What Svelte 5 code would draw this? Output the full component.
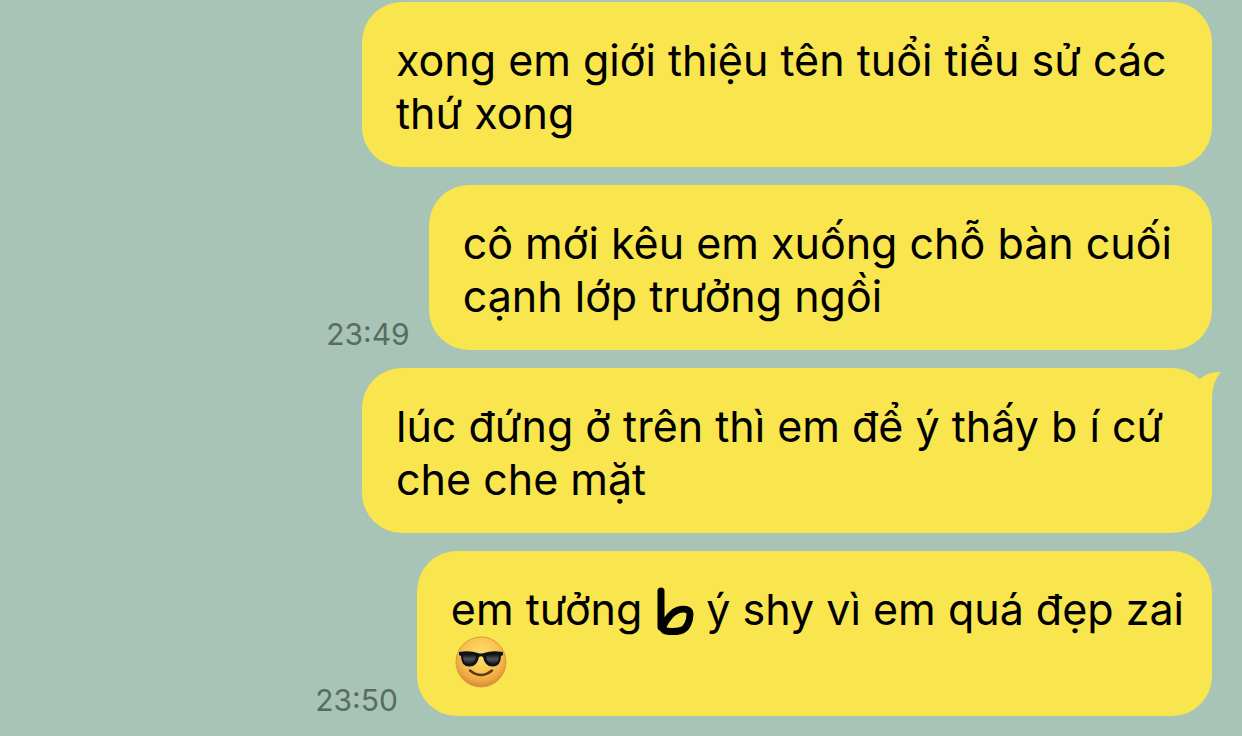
<script lang="ts">
  type Message = {
    lines: string[];
    time?: string;
    wide?: boolean;
    tail?: boolean;
    signed?: boolean;
  };

  const messages: Message[] = [
    { lines: ["xong em giới thiệu tên tuổi tiểu sử các", "thứ xong"], wide: true },
    { lines: ["cô mới kêu em xuống chỗ bàn cuối", "cạnh lớp trưởng ngồi"], time: "23:49" },
    { lines: ["lúc đứng ở trên thì em để ý thấy b í cứ", "che che mặt"], wide: true, tail: true },
    { lines: ["em tưởng", "ý shy vì em quá đẹp zai"], time: "23:50", signed: true },
  ];
</script>

<main>
  {#each messages as message}
    <article class="message">
      {#if message.time}
        <time>{message.time}</time>
      {/if}
      <div class="bubble" class:wide={message.wide} class:snug={message.signed}>
        {#if message.signed}
          <p class="line signed">
            <span>{message.lines[0]}</span>
            <svg class="scribble" viewBox="0 0 40 53" aria-hidden="true">
              <path d="M7 8V44M8 45C12 37 18 29 24 27C29 25.500 36 25.500 36 31C36 38 33 46 27 47.500C21 49 13 49 10 47" />
            </svg>
            <span>{message.lines[1]}</span>
          </p>
          <svg class="emoji" viewBox="0 0 52 52" role="img" aria-label="smiling face with sunglasses">
            <defs>
              <radialGradient id="face" cx="50%" cy="36%" r="66%">
                <stop offset="0" stop-color="#ffdf70" />
                <stop offset="0.5" stop-color="#fac652" />
                <stop offset="0.8" stop-color="#eda540" />
                <stop offset="1" stop-color="#cf8035" />
              </radialGradient>
              <linearGradient id="lens" x1="0" y1="0" x2="0" y2="1">
                <stop offset="0" stop-color="#111" />
                <stop offset="0.5" stop-color="#50545a" />
                <stop offset="1" stop-color="#16181a" />
              </linearGradient>
            </defs>
            <circle cx="26" cy="26" r="25" fill="url(#face)" stroke="#d99a3e" />
            <path d="M4 16Q15 14 23 17Q26 18 29 17Q37 14 48 16L48 19L46 20Q46 30 38 30.500Q30 31 28 21Q26 19.500 24 21Q22 31 14 30.500Q6 30 6 20L4 19Z" fill="#101214" />
            <path d="M8 19Q15 17 21 20Q20 28 14 28Q8 28 8 19ZM44 19Q37 17 31 20Q32 28 38 28Q44 28 44 19Z" fill="url(#lens)" />
            <path d="M15 34.500Q26 43.500 37 34.500" fill="none" stroke="#63351a" stroke-width="2.500" stroke-linecap="round" />
          </svg>
        {:else}
          {#each message.lines as line}
            <p class="line">{line}</p>
          {/each}
        {/if}
        {#if message.tail}
          <svg class="tail" viewBox="0 0 24 40" aria-hidden="true">
            <path d="M3 11Q11 3 24 4Q15 14 15 32V40H3Z" />
          </svg>
        {/if}
      </div>
    </article>
  {/each}
</main>

<style>
  :global(body) {
    margin: 0;
    background: #a7c4b7;
  }

  main {
    display: flex;
    flex-direction: column;
    gap: 18px;
    padding: 2px 30px 20px;
    font-family: Inter, "Noto Sans", sans-serif;
    color: #000;
  }

  .message {
    display: flex;
    justify-content: flex-end;
    align-items: flex-end;
    gap: 19px;
  }

  .bubble {
    position: relative;
    box-sizing: border-box;
    min-height: 165px;
    padding: 32px 40px 26px 34px;
    border-radius: 40px;
    background: #f9e54d;
  }

  .wide {
    min-width: 850px;
  }

  .snug {
    padding-right: 28px;
  }

  .line {
    margin: 0;
    font-size: 43px;
    line-height: 53px;
    white-space: nowrap;
  }

  time {
    font-size: 30px;
    line-height: 32px;
    color: #586c61;
  }

  .signed {
    display: flex;
    gap: 12px;
  }

  .scribble {
    width: 40px;
    height: 53px;
    fill: none;
    stroke: #000;
    stroke-width: 7;
    stroke-linecap: round;
    stroke-linejoin: round;
  }

  .emoji {
    display: block;
    width: 52px;
    height: 52px;
    margin-left: 4px;
  }

  .tail {
    position: absolute;
    top: 0;
    right: -9px;
    width: 24px;
    height: 40px;
    fill: #f9e54d;
  }
</style>
